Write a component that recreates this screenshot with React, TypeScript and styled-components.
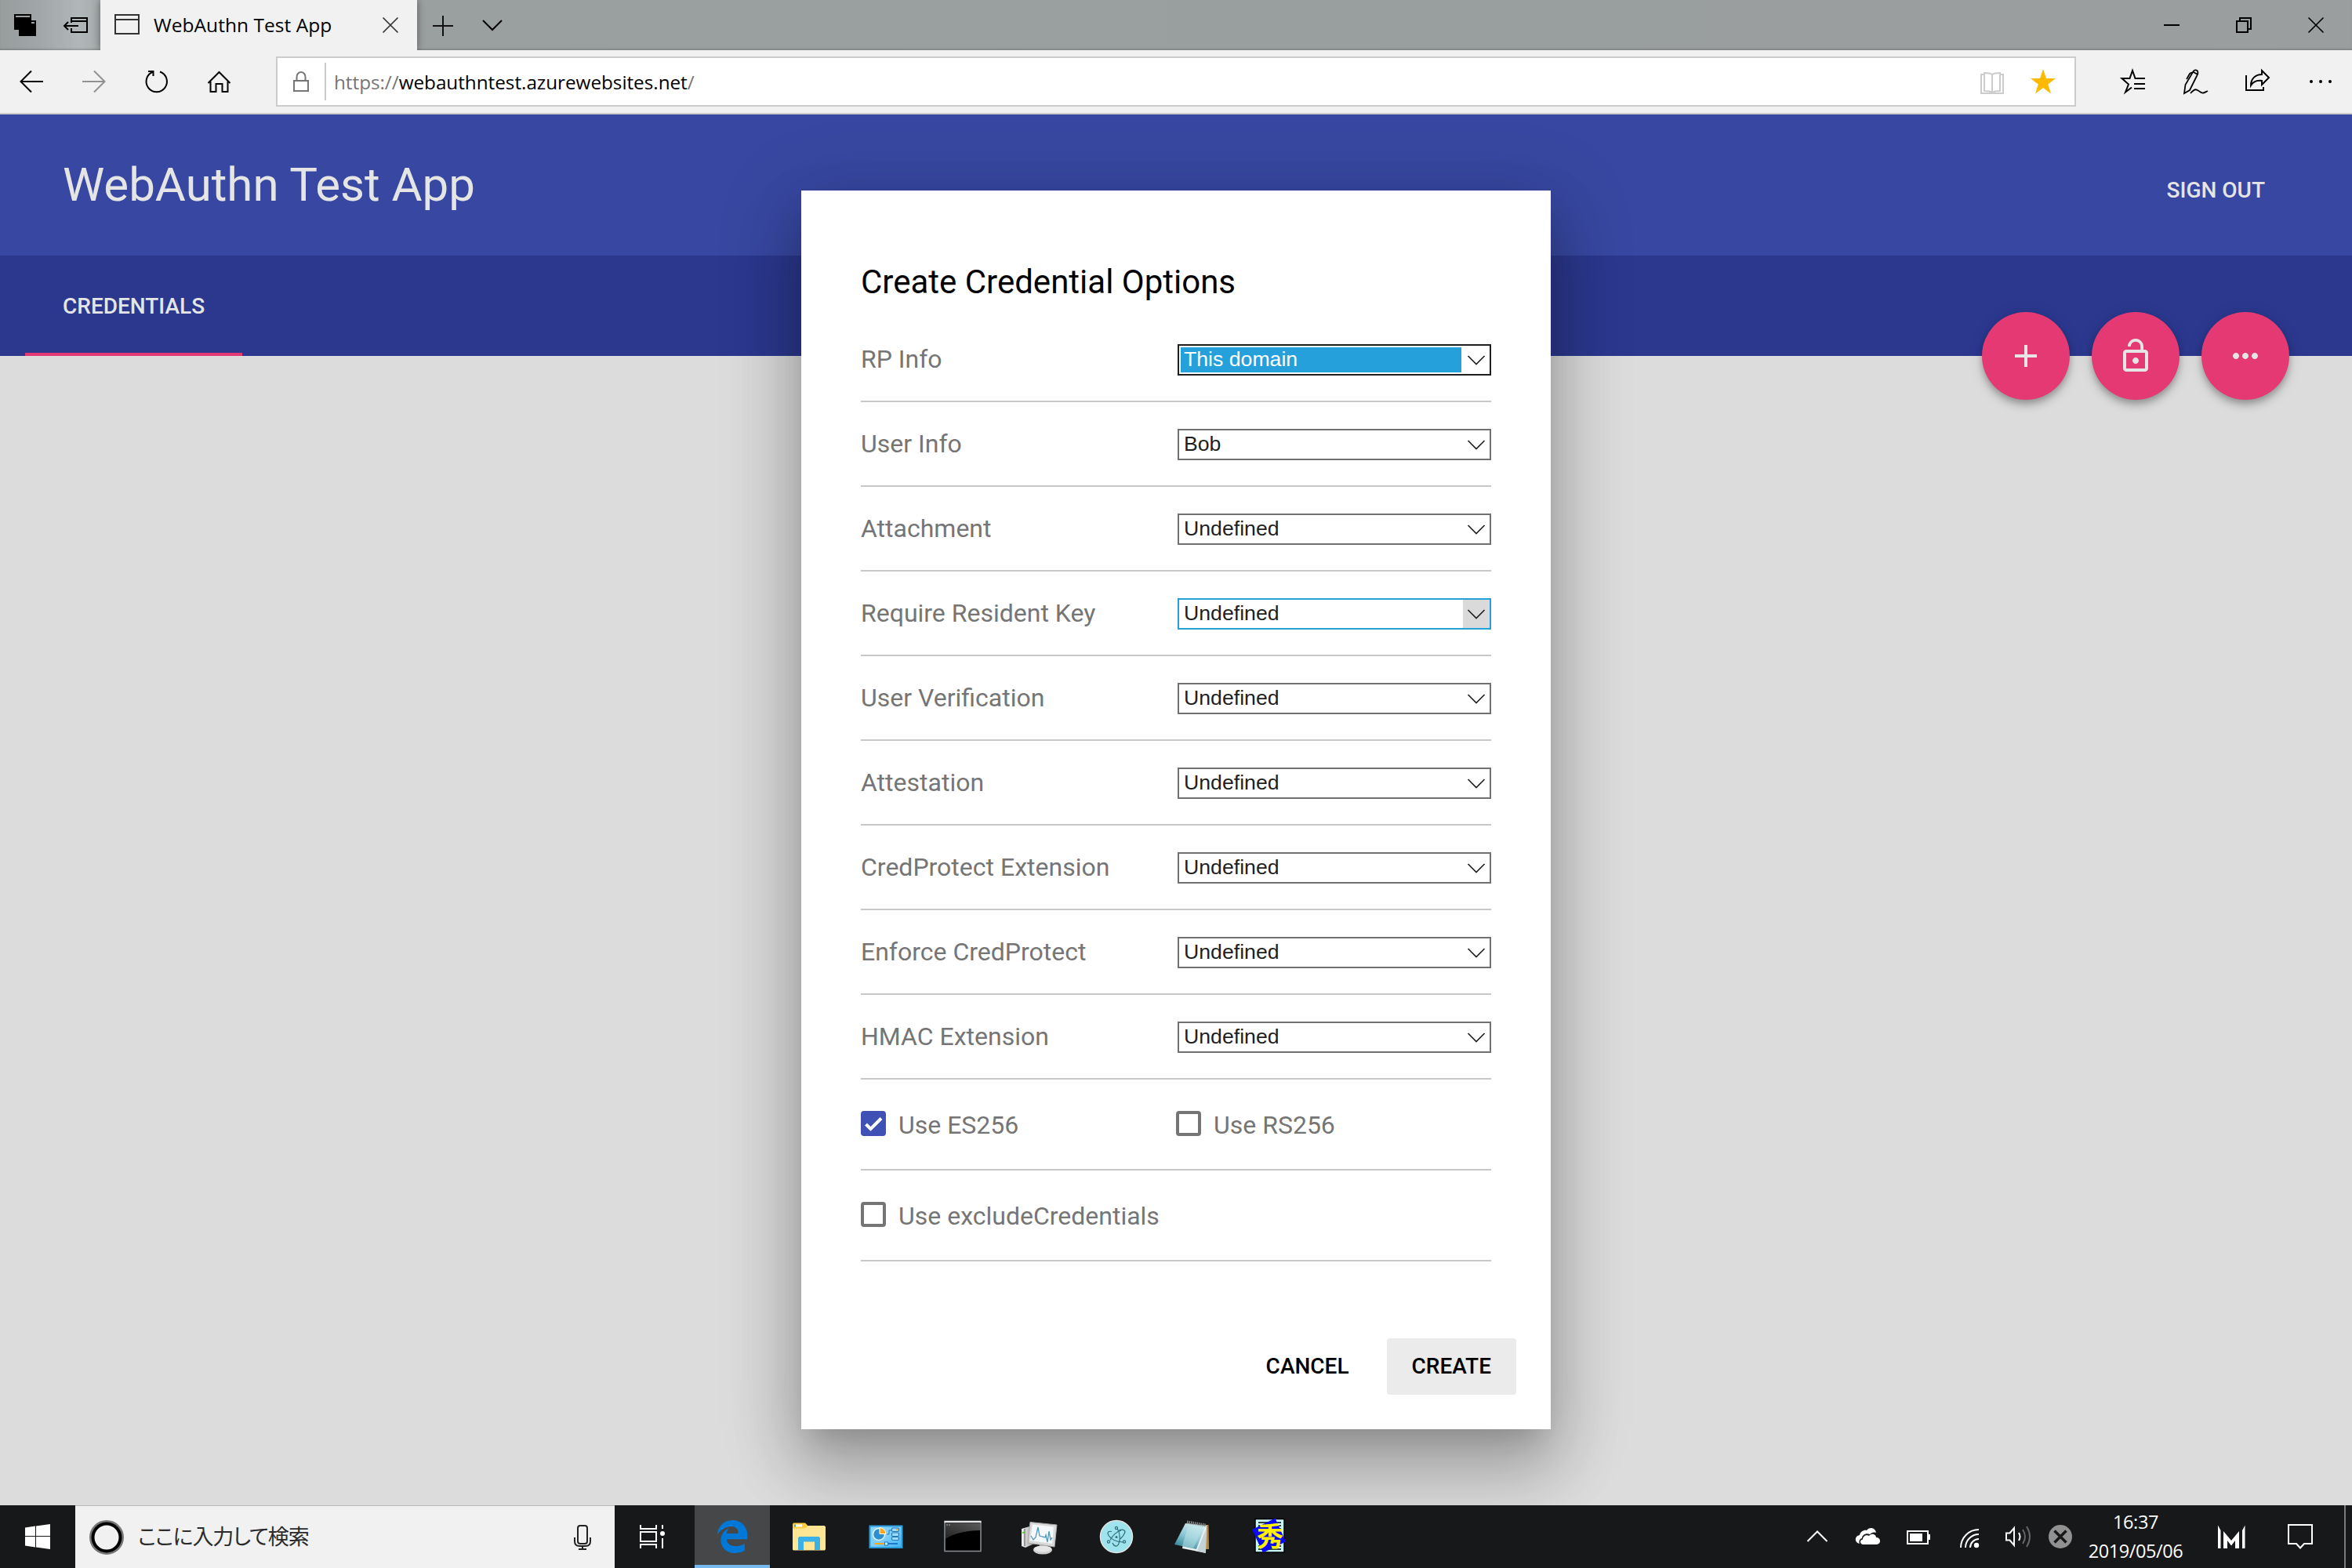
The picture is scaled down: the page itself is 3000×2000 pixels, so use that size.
import React from "react";
import styled, { createGlobalStyle, css } from "styled-components";

const roboto = `Roboto, "Liberation Sans", sans-serif`;
const system = `"Open Sans", "Noto Sans", "Noto Sans CJK JP", sans-serif`;

const GlobalStyle = createGlobalStyle`
  * { box-sizing: border-box; }
  html, body { margin: 0; padding: 0; overflow: hidden; }
  svg { display: block; flex: none; overflow: visible; }
`;

const Screen = styled.div`
  display: flex;
  flex-direction: column;
  width: 3000px;
  height: 2000px;
  overflow: hidden;
  background: #ddd;
  font-family: ${roboto};
`;

/* ---------- browser chrome ---------- */

const TitleBar = styled.div`
  display: flex;
  height: 64px;
  background: linear-gradient(90deg, #979c9d 0, #a1a6a8 50px, #b1b6b8 100px, #a6abac 128px, #9a9f9f 560px, #9a9e9e 100%);
  box-shadow: inset 0 -3px 3px -2px rgba(0, 0, 0, 0.25);
`;

const Slot = styled.div<{ $w: number }>`
  display: flex;
  align-items: center;
  justify-content: center;
  flex: none;
  width: ${(p) => p.$w}px;
  height: 100%;
`;

const Tab = styled.div`
  display: flex;
  align-items: center;
  width: 404px;
  padding: 0 10px 0 10px;
  background: #f1f1f1;
  box-shadow: 0 0 10px rgba(0, 0, 0, 0.45);
  clip-path: inset(0 -12px 0 -12px);
`;

const TabTitle = styled.span`
  flex: 1;
  padding-left: 10px;
  font: 24.5px/34px ${system};
  letter-spacing: 0.05px;
  color: #000;
  white-space: nowrap;
`;

const Spacer = styled.div`
  flex: 1;
`;

const Toolbar = styled.div`
  display: flex;
  align-items: center;
  height: 82px;
  flex: none;
  background: #f1f1f1;
  border-bottom: 2px solid #ccc;
`;

const AddressBar = styled.div`
  display: flex;
  align-items: center;
  flex: 1;
  height: 64px;
  margin: 0 32px;
  background: #fff;
  border: 2px solid #ccc;
`;

const AddressDivider = styled.div`
  width: 2px;
  height: 48px;
  background: #ccc;
`;

const Url = styled.span`
  flex: 1;
  padding: 1px 0 0 10px;
  font: 24.3px/34px ${system};
  letter-spacing: -0.03px;
  color: #767676;
  white-space: nowrap;
  b {
    font-weight: 400;
    color: #000;
  }
`;

/* ---------- page ---------- */

const Page = styled.main`
  position: relative;
  flex: 1;
  background: #f5f5f5;
`;

const Header = styled.header`
  display: flex;
  align-items: center;
  justify-content: space-between;
  height: 180px;
  padding: 0 111px 0 80px;
  background: #3f51b5;
  color: #fff;
`;

const AppTitle = styled.h1`
  margin: 0;
  font: 400 60px/72px ${roboto};
`;

const HeaderLink = styled.a`
  padding-top: 13px;
  font: 500 28px/36px ${roboto};
  text-transform: uppercase;
`;

const TabBar = styled.nav`
  display: flex;
  height: 128px;
  padding-left: 32px;
  background: #303f9f;
`;

const PageTab = styled.a`
  display: flex;
  align-items: center;
  padding: 5px 48px 0;
  border-bottom: 4px solid #ff4081;
  color: #fff;
  font: 500 28px/36px ${roboto};
  text-transform: uppercase;
`;

const FabGroup = styled.div`
  position: absolute;
  top: 252px;
  right: 80px;
  display: flex;
  gap: 28px;
`;

const Fab = styled.button`
  display: flex;
  align-items: center;
  justify-content: center;
  width: 112px;
  height: 112px;
  padding: 0;
  border: 0;
  border-radius: 50%;
  background: #ff4081;
  color: #fff;
  box-shadow: 0 8px 10px 0 rgba(0, 0, 0, 0.14), 0 2px 20px 0 rgba(0, 0, 0, 0.12), 0 4px 8px -2px rgba(0, 0, 0, 0.2);
`;

const Scrim = styled.div`
  position: absolute;
  inset: 0;
  display: flex;
  align-items: flex-start;
  justify-content: center;
  padding-top: 97px;
  background: rgba(0, 0, 0, 0.1);
  overflow: hidden;
`;

/* ---------- dialog ---------- */

const Dialog = styled.section`
  width: 956px;
  height: 1580px;
  background: #fff;
  box-shadow: 0 18px 92px 16px rgba(0, 0, 0, 0.14), 0 22px 30px -14px rgba(0, 0, 0, 0.12),
    0 48px 76px 6px rgba(0, 0, 0, 0.2);
`;

const DialogContent = styled.div`
  padding: 93px 76px 0;
`;

const DialogTitle = styled.h2`
  margin: 0 0 21px;
  font: 400 42px/48px ${roboto};
  color: #000;
`;

const OptionRow = styled.div`
  display: flex;
  align-items: center;
  justify-content: space-between;
  height: 108px;
  padding: 34px 0 32px;
  border-bottom: 2px solid #c8c8c8;
`;

const OptionLabel = styled.label`
  padding-bottom: 2px;
  font: 400 32px/36px ${roboto};
  color: #757575;
  white-space: nowrap;
`;

type SelectState = "normal" | "focused" | "hovered";

const selectBorder: Record<SelectState, string> = {
  normal: "#707070",
  focused: "#1f1f1f",
  hovered: "#26a0da",
};

const SelectBox = styled.div<{ $state: SelectState }>`
  display: flex;
  width: 400px;
  height: 40px;
  border: 2px solid ${(p) => selectBorder[p.$state]};
  background: #fff;
`;

const SelectValue = styled.span<{ $state: SelectState }>`
  flex: 1;
  padding-left: 6px;
  font: 26.67px/34px "Liberation Sans", Arial, sans-serif;
  color: #1f1f1f;
  ${(p) =>
    p.$state === "focused" &&
    css`
      margin: 2px 2px 2px 2px;
      padding-left: 4px;
      line-height: 30px;
      background: #26a0da;
      color: #fff;
    `}
`;

const SelectArrow = styled.span<{ $state: SelectState }>`
  display: flex;
  align-items: center;
  justify-content: center;
  width: 34px;
  background: ${(p) => (p.$state === "hovered" ? "#dadada" : "transparent")};
`;

const CheckRow = styled.div`
  display: grid;
  grid-template-columns: 1fr 1fr;
  height: 116px;
  padding-top: 40px;
  border-bottom: 2px solid #c8c8c8;
`;

const CheckItem = styled.label`
  display: flex;
  align-items: center;
  gap: 16px;
  height: 32px;
`;

const CheckBox = styled.span<{ $checked: boolean }>`
  display: flex;
  width: 32px;
  height: 32px;
  border: ${(p) => (p.$checked ? "0" : "4px solid #757575")};
  border-radius: 4px;
  background: ${(p) => (p.$checked ? "#3f51b5" : "#fff")};
`;

const CheckLabel = styled.span`
  margin-top: 4px;
  font: 400 32px/36px ${roboto};
  color: #757575;
`;

const DialogActions = styled.footer`
  display: flex;
  justify-content: flex-end;
  gap: 16px;
  padding: 98px 44px 0;
`;

const ActionButton = styled.button<{ $active?: boolean }>`
  height: 72px;
  padding: 0 32px;
  border: 0;
  border-radius: 4px;
  background: ${(p) => (p.$active ? "#ebebeb" : "transparent")};
  color: #000;
  font: 500 28px/72px ${roboto};
  text-transform: uppercase;
`;

/* ---------- taskbar ---------- */

const Taskbar = styled.div`
  display: flex;
  height: 80px;
  flex: none;
  background: #17181a;
  color: #fff;
`;

const SearchBox = styled.div`
  display: flex;
  align-items: center;
  width: 688px;
  padding: 0 9px 0 4px;
  background: #f1f1f1;
  border-top: 1px solid #b9b9b9;
`;

const SearchText = styled.span`
  flex: 1;
  padding: 0 0 3px 4px;
  font: 27px/40px "Noto Sans CJK JP", sans-serif;
  font-feature-settings: "palt";
  letter-spacing: -1.1px;
  color: #2b2b2b;
`;

const AppButton = styled.div<{ $active?: boolean }>`
  display: flex;
  align-items: center;
  justify-content: center;
  width: 96px;
  height: 80px;
  margin-right: 2px;
  ${(p) =>
    p.$active &&
    css`
      padding-top: 4px;
      background: #464748;
      border-bottom: 4px solid #76b9ed;
    `}
`;

const AppList = styled.div`
  display: flex;
  flex: 1;
  padding-left: 6px;
`;

const Clock = styled.div`
  width: 148px;
  padding-top: 3px;
  font: 23.5px/37px ${system};
  letter-spacing: -0.4px;
  text-align: center;
`;

const ShowDesktop = styled.div`
  width: 10px;
  margin-left: 16px;
  border-left: 2px solid #77797a;
`;

/* ---------- icons, drawn around their own centre ---------- */

type IconProps = { children: React.ReactNode; stroke?: string; sw?: number };

const Icon = ({ children, stroke = "none", sw = 2 }: IconProps) => (
  <svg width="52" height="52" viewBox="-26 -26 52 52" fill="none" stroke={stroke} strokeWidth={sw}>
    {children}
  </svg>
);

const Material = ({ d }: { d: string }) => (
  <svg width="48" height="48" viewBox="0 0 24 24" fill="currentColor">
    <path d={d} />
  </svg>
);

const TabsAsideIcon = () => (
  <Icon>
    <path fill="#000" fillRule="evenodd" d="M-14-14H8V6H-14zM-12-12V-10H6V-12z" />
    <path fill="#000" fillRule="evenodd" d="M-8-6H14V14H-8zM-6-4V-2H12V-4z" />
  </Icon>
);

const SetAsideIcon = () => (
  <Icon stroke="#000">
    <path d="M-5-3V-9H15V9H-5V4M-5-5H15M-14 1H4M-9-4L-14 1L-9 6" />
  </Icon>
);

const PageIcon = () => (
  <Icon stroke="#333">
    <path d="M-15-13H15V11H-15zM-15-7H15" />
  </Icon>
);

const CloseIcon = ({ color = "#000" }: { color?: string }) => (
  <Icon stroke={color} sw={1.7}>
    <path d="M-9.5-9.5L9.5 9.5M9.5-9.5L-9.5 9.5" />
  </Icon>
);

const Arrow = ({ color, flip }: { color: string; flip?: boolean }) => (
  <Icon stroke={color}>
    <path transform={flip ? "scale(-1 1)" : undefined} d="M15 0H-13M0-13.5L-13.5 0L0 13.5" />
  </Icon>
);

const ChevronDown = () => (
  <svg width="24" height="14" viewBox="-12 -7 24 14" fill="none" stroke="#222" strokeWidth="1.7">
    <path d="M-10.5-5L0 5.5L10.5-5" />
  </svg>
);

const EdgeIcon = () => (
  <svg width="44" height="44" viewBox="-5 -5 522 522" fill="#0078d7">
    <path d="M25.71 228.16l.35-.48c0 .16 0 .32-.07.48zm460.58 15.51c0-44-7.76-84.46-28.81-122.4C416.5 47.88 343.91 8 258.89 8 119 7.72 40.62 113.21 26.06 227.68c42.42-61.31 117.07-121.38 220.37-125 0 0 109.67 0 99.42 105H170c6.37-37.39 18.55-59 34.34-78.93-75.05 34.9-121.85 96.1-120.75 188.32.83 71.45 50.13 144.84 120.75 172 83.35 31.84 192.77 7.2 240.13-21.33V363.31C363.6 419.8 173.6 424.23 172.21 295.74h314.13v-52.07z" />
  </svg>
);

const FolderIcon = () => (
  <Icon>
    <path fill="#ffe694" d="M-21-14H19.5L21-12.500V16L20 17.500H-20L-21 16.500z" />
    <path fill="#ffcd3c" d="M-21-16L-20-17.500H-5L-2-14.500V-13L-6-10.500H-21z" />
    <path fill="#fff" d="M-17-15.500H-9V-12.500H-17z" />
    <path fill="#3bb1e8" d="M-19-15.500H-17V-12.500H-19zM-14 1.500L-12.500 0H12.500L14 1.500V17H7V6.500H-7V17H-14z" />
  </Icon>
);

const ControlPanelIcon = () => (
  <Icon>
    <defs>
      <linearGradient id="cpBg" x1="0" y1="0" x2="1" y2="1">
        <stop offset="0" stopColor="#8fd6fb" />
        <stop offset="0.5" stopColor="#7dcffb" />
        <stop offset="1" stopColor="#3fb2f5" />
      </linearGradient>
    </defs>
    <rect x="-20.500" y="-13.500" width="41" height="27.500" fill="url(#cpBg)" stroke="#2c9bdc" />
    <circle cx="-9" cy="-3" r="7.500" fill="#2b8fd0" stroke="#e6f6ff" strokeWidth="1.500" />
    <path fill="#fca81c" stroke="#fff" strokeWidth="1" d="M-8-3.500V-11.500A8 8 0 0 1 0-3.500z" />
    <path stroke="#2479b8" strokeWidth="1" d="M1-3H4V-8H7" />
    <g fill="#9fdcff" stroke="#2479b8" strokeWidth="1.200">
      <rect x="7.500" y="-11" width="9" height="4.500" rx="1.500" />
      <rect x="7.500" y="-5" width="9" height="4.500" rx="1.500" />
      <rect x="7.500" y="0.500" width="9" height="4" rx="1.500" />
    </g>
    <rect x="13" y="-10" width="2.500" height="2" fill="#fca81c" />
    <path stroke="#fca81c" d="M-15 9H-2" />
    <path stroke="#1e78c8" d="M2 9H15" />
    <rect x="-1.500" y="7" width="4" height="4" fill="#d8f0ff" stroke="#2479b8" strokeWidth="1" />
  </Icon>
);

const TerminalIcon = () => (
  <Icon>
    <defs>
      <linearGradient id="termGlare" x1="0" y1="1" x2="1" y2="0">
        <stop offset="0" stopColor="#222" />
        <stop offset="1" stopColor="#5a5a5a" />
      </linearGradient>
    </defs>
    <rect x="-23" y="-19" width="46" height="37.500" fill="#000" stroke="#8d9099" strokeWidth="1.500" />
    <path fill="url(#termGlare)" d="M-22-17H22V-8C4-8-12-4-22 3z" />
    <path stroke="#e8e8ea" strokeWidth="2.500" d="M-23.500-19H23.500" />
    <path stroke="#aaa" strokeWidth="1" strokeDasharray="2 1" d="M-21-15H-15" />
  </Icon>
);

const MonitorIcon = () => (
  <Icon>
    <defs>
      <linearGradient id="pcCase" x1="0" y1="0" x2="1" y2="0">
        <stop offset="0" stopColor="#f2f2f2" />
        <stop offset="1" stopColor="#9a9a9a" />
      </linearGradient>
    </defs>
    <path fill="url(#pcCase)" d="M-23-10L-13-13L-7-11V9L-18 14L-23 12z" />
    <path stroke="#555" strokeWidth="1" d="M-19-10V12" />
    <path stroke="#61c63c" d="M-22-5L-19-5.500" />
    <ellipse cx="4" cy="17" rx="12" ry="5.500" fill="#cfcfcf" />
    <path fill="#999" d="M0 8H8L9 16H0z" />
    <ellipse cx="4" cy="15.500" rx="11" ry="4" fill="#e6e6e6" />
    <path fill="#d9d9d9" stroke="#a9a9a9" strokeWidth="1" d="M-12-18.500L22-15L19 13L-15 8z" />
    <path fill="#f4f9fd" d="M-9-15.500L18-12.500L16 9L-12 5z" />
    <path stroke="#4e96bf" strokeWidth="1.300" d="M-11-1L-8 4L-5 1L-2-12L0-1L3 0L7 1L8-2L10 7L12-7L14 4L16 1" />
  </Icon>
);

const ElectronIcon = () => (
  <Icon>
    <circle r="20.500" fill="#9fe3ec" stroke="#e3e3e3" strokeWidth="1.500" />
    <g stroke="#2f6f7d" strokeWidth="1.200">
      <path d="M-6-6.500C-11-7.500-12-5-10-1.500C-7 3-1 6.500 8 7" />
      <path d="M3-8C9-10 12-8 10.500-4.500C9-1 7 1 5 3" />
      <path d="M-8 4.500C-4-3 1-6.500 6-8" />
      <path d="M1-10.500C5-4 5 4 3 9C1 13.500-3 13-5 8" />
      <circle cx="0" cy="-11" r="1.600" />
      <circle cx="-10" cy="6.500" r="1.600" />
      <circle cx="10" cy="6.500" r="1.600" />
    </g>
    <circle r="1.500" cy="0.500" fill="#2f6f7d" />
  </Icon>
);

const NotepadIcon = () => (
  <Icon>
    <defs>
      <linearGradient id="noteCover" x1="0.700" y1="0" x2="0.200" y2="1">
        <stop offset="0" stopColor="#d5edf1" />
        <stop offset="0.500" stopColor="#8cc7d3" />
        <stop offset="1" stopColor="#2b8193" />
      </linearGradient>
    </defs>
    <path fill="#b38b47" d="M16-15H19.500L20 16H14z" />
    <path fill="#e9f0f2" d="M-8-17L17-14L16 21L-14 15z" />
    <path fill="#c3d2d6" d="M16-9L16 21L5 18z" />
    <path fill="url(#noteCover)" d="M-10-17L15.500-14L4 16L-24 10z" />
    <path fill="#bfe3ea" opacity="0.500" d="M-6-16L14-14L0 15L-14 12z" />
    <path stroke="#8b8b8b" strokeWidth="4" strokeDasharray="1.500 1" d="M-8-18.500L16-14.500" />
  </Icon>
);

const HidemaruIcon = () => (
  <Icon>
    <rect x="-19" y="-22.500" width="37" height="42.500" fill="#c9f7f7" stroke="#000" strokeWidth="1.500" />
    <path
      stroke="#000"
      strokeWidth="1.600"
      d="M-15-18H14M-15-14H14M-15-10H14M-15-6H14M-15 4H14M-15 8H14M-15 12H14M-15 16H14"
    />
    <path fill="#0a0af0" d="M6.500-23.500L20 6.500L-9 20.500L-23-9z" />
    <text
      x="0"
      y="11.500"
      textAnchor="middle"
      fill="#ffef00"
      stroke="none"
      fontFamily="'Noto Sans CJK JP', sans-serif"
      fontSize="34"
      fontWeight="700"
    >
      秀
    </text>
  </Icon>
);

/* ---------- content ---------- */

const options: { label: string; value: string; state?: SelectState }[] = [
  { label: "RP Info", value: "This domain", state: "focused" },
  { label: "User Info", value: "Bob" },
  { label: "Attachment", value: "Undefined" },
  { label: "Require Resident Key", value: "Undefined", state: "hovered" },
  { label: "User Verification", value: "Undefined" },
  { label: "Attestation", value: "Undefined" },
  { label: "CredProtect Extension", value: "Undefined" },
  { label: "Enforce CredProtect", value: "Undefined" },
  { label: "HMAC Extension", value: "Undefined" },
];

const Select = ({ value, state = "normal" }: { value: string; state?: SelectState }) => (
  <SelectBox $state={state}>
    <SelectValue $state={state}>{value}</SelectValue>
    <SelectArrow $state={state}>
      <ChevronDown />
    </SelectArrow>
  </SelectBox>
);

const Check = ({ label, checked = false }: { label: string; checked?: boolean }) => (
  <CheckItem>
    <CheckBox $checked={checked}>
      {checked && (
        <svg width="32" height="32" viewBox="0 0 32 32" fill="none" stroke="#fff" strokeWidth="4">
          <path d="M6.500 17L12.500 23L26 9.500" />
        </svg>
      )}
    </CheckBox>
    <CheckLabel>{label}</CheckLabel>
  </CheckItem>
);

const BrowserChrome = () => (
  <>
    <TitleBar>
      <Slot $w={64}><TabsAsideIcon /></Slot>
      <Slot $w={64}><SetAsideIcon /></Slot>
      <Tab>
        <Slot $w={48}><PageIcon /></Slot>
        <TabTitle>WebAuthn Test App</TabTitle>
        <Slot $w={48}><CloseIcon color="#333" /></Slot>
      </Tab>
      <Slot $w={64}>
        <Icon stroke="#111"><path d="M-12 1H14M1-12V14" /></Icon>
      </Slot>
      <Slot $w={64}>
        <Icon stroke="#000"><path d="M-12-6L0 6L12-6" /></Icon>
      </Slot>
      <Spacer />
      <Slot $w={92}>
        <Icon stroke="#000"><path d="M-10 0H10" /></Icon>
      </Slot>
      <Slot $w={92}>
        <Icon stroke="#000"><path d="M-9-5H5V9H-9zM-5-5V-9H9V5H5" /></Icon>
      </Slot>
      <Slot $w={92}><CloseIcon /></Slot>
    </TitleBar>
    <Toolbar>
      <Slot $w={80}><Arrow color="#000" /></Slot>
      <Slot $w={80}><Arrow color="#919191" flip /></Slot>
      <Slot $w={80}>
        <Icon stroke="#000">
          <path d="M4-12.500A13.200 13.200 0 1 1-4.500-12.500M-11-13H-4.500V-7" />
        </Icon>
      </Slot>
      <Slot $w={80}>
        <Icon stroke="#000">
          <path d="M-14.500 2L-0.500-12L13.500 2M-11.500 0V13H-4.500V3H3.500V13H10.500V0" />
        </Icon>
      </Slot>
      <AddressBar>
        <Slot $w={60}>
          <Icon stroke="#767676"><path d="M-9-1H9V12H-9zM-5.500-1V-6A5.500 6 0 0 1 5.500-6V-1" /></Icon>
        </Slot>
        <AddressDivider />
        <Url>https://<b>webauthntest.azurewebsites.net</b>/</Url>
        <Slot $w={66}>
          <Icon stroke="#ccc">
            <path d="M-10-9H-14V15H14V-9H10M0-9V14M0-9Q-3-11-10-11V12Q-3 12 0 14Q3 12 10 12V-11Q3-11 0-9" />
          </Icon>
        </Slot>
        <Slot $w={64}>
          <Icon>
            <path fill="#ffb900" d="M0-16L4-4H16L6.200 3.500L10 15.500L0 8L-10 15.500L-6.200 3.500L-16-4H-4z" />
          </Icon>
        </Slot>
        <Slot $w={8} />
      </AddressBar>
      <Slot $w={80}>
        <Icon stroke="#000">
          <path d="M16-4H3.500L0-14L-3.500-4H-13.500L-5 3.500L-9 13.500L-1 7.500M2 3H16M2 9H16" />
        </Icon>
      </Slot>
      <Slot $w={80}>
        <Icon stroke="#000" sw={1.8}>
          <path d="M-14 15L-12.500 4L-3-12Q-1-16 2.500-14Q4-12 3-9L-5 7L-7 11zM-2-12L3-9M-11-3L-7-10Q-5-12-3-11" />
          <path d="M-6 15C0 8 2 10 6 13S12 14 16 12" />
        </Icon>
      </Slot>
      <Slot $w={80}>
        <Icon stroke="#000">
          <path d="M-15-8V11H7V7M5-14L14-5L5 4V-1C-2-2-6 0-9 5C-9-4-3-9 5-9z" />
        </Icon>
      </Slot>
      <Slot $w={80}>
        <Icon>
          <path
            stroke="#000"
            strokeWidth="4"
            strokeLinecap="round"
            d="M-12 0H-11.990M0 0H0.010M12 0H12.010"
          />
        </Icon>
      </Slot>
    </Toolbar>
  </>
);

const CredentialDialog = () => (
  <Dialog>
    <DialogContent>
      <DialogTitle>Create Credential Options</DialogTitle>
      {options.map((o) => (
        <OptionRow key={o.label}>
          <OptionLabel>{o.label}</OptionLabel>
          <Select value={o.value} state={o.state} />
        </OptionRow>
      ))}
      <CheckRow>
        <Check label="Use ES256" checked />
        <Check label="Use RS256" />
      </CheckRow>
      <CheckRow>
        <Check label="Use excludeCredentials" />
      </CheckRow>
    </DialogContent>
    <DialogActions>
      <ActionButton>Cancel</ActionButton>
      <ActionButton $active>Create</ActionButton>
    </DialogActions>
  </Dialog>
);

const WindowsTaskbar = () => (
  <Taskbar>
    <Slot $w={96}>
      <Icon>
        <path
          fill="#fff"
          d="M-16-11.500L-3-13.400V-1H-16zM-2-13.500L16-16V-1H-2zM-16 0H-3V13.400L-16 11.500zM-2 0H16V16L-2 13.500z"
        />
      </Icon>
    </Slot>
    <SearchBox>
      <Slot $w={72}>
        <Icon>
          <circle r="20.500" stroke="#777" strokeWidth="3" />
          <circle r="17.500" stroke="#000" strokeWidth="4" />
        </Icon>
      </Slot>
      <SearchText>ここに入力して検索</SearchText>
      <Slot $w={64}>
        <Icon stroke="#222">
          <rect x="-6" y="-15" width="12" height="23" rx="3" />
          <path d="M-10 0V5Q-10 11-4 11H4Q10 11 10 5V0M0 11V15M-5 15H5" />
        </Icon>
      </Slot>
    </SearchBox>
    <Slot $w={96}>
      <Icon stroke="#fff">
        <path d="M-15-15V-10H5V-15M-15-6H5V6H-15zM-15 15V10H5V15M13-15V-10M13 2V15" />
        <circle cx="13" cy="-4" r="3" fill="#fff" stroke="none" />
      </Icon>
    </Slot>
    <AppList>
      <AppButton $active><EdgeIcon /></AppButton>
      <AppButton><FolderIcon /></AppButton>
      <AppButton><ControlPanelIcon /></AppButton>
      <AppButton><TerminalIcon /></AppButton>
      <AppButton><MonitorIcon /></AppButton>
      <AppButton><ElectronIcon /></AppButton>
      <AppButton><NotepadIcon /></AppButton>
      <AppButton><HidemaruIcon /></AppButton>
    </AppList>
    <Slot $w={64}>
      <Icon stroke="#fff"><path d="M-12.500 6L0-6.500L12.500 6" /></Icon>
    </Slot>
    <Slot $w={64}>
      <Icon>
        <path
          fill="#fff"
          d="M-10 9C-17 8-17-1-10-2C-9-7-4-9-1-8C2-13 10-12 11-5C8-6 5-5 3-3C-2-5-7-2-7 2C-11 3-11 7-10 9z"
        />
        <path
          fill="#fff"
          d="M-6 10C-10 9-10 4-6 3.500C-6-1-1-3 2-1C5-5 11-3 11 1C17 1 18 9 12 10z"
        />
      </Icon>
    </Slot>
    <Slot $w={64}>
      <Icon>
        <path stroke="#fff" d="M-13-7H13V9H-13z" />
        <path fill="#fff" d="M-10-4H6V6H-10zM14-3H16V4H14z" />
      </Icon>
    </Slot>
    <Slot $w={64}>
      <Icon stroke="#fff">
        <path d="M-9 14A23 23 0 0 1 14-9M-3 14A17 17 0 0 1 14-3M3 14A11 11 0 0 1 14 3" />
        <circle cx="11" cy="11" r="3.200" fill="#fff" stroke="none" />
      </Icon>
    </Slot>
    <Slot $w={64}>
      <Icon stroke="#fff">
        <path d="M-15-4.500H-10.500L-5-11V11L-10.500 4.500H-15z" />
        <path d="M1-5Q4 0 1 5" />
        <g stroke="#666">
          <path d="M6-9Q12 0 6 9" />
          <path d="M11-13Q19 0 11 13" />
        </g>
      </Icon>
    </Slot>
    <Slot $w={44}>
      <Icon>
        <circle r="15" fill="#919191" />
        <path stroke="#17181a" strokeWidth="3.500" d="M-7.500-7.500L7.500 7.500M7.500-7.500L-7.500 7.500" />
      </Icon>
    </Slot>
    <Clock>
      <div>16:37</div>
      <div>2019/05/06</div>
    </Clock>
    <Slot $w={96}>
      <Icon>
        <path
          fill="#fff"
          d="M-17-14.500L-13.500-8V15H-17zM17.500-14.500L14-8V15H17.500zM-10-7L0 5L10-7V15H5V5L0 11.500L-5 5V15H-10z"
        />
      </Icon>
    </Slot>
    <Slot $w={80}>
      <Icon stroke="#fff">
        <path d="M-15-15H15V9H5L0 14.500L-5 9H-15z" />
      </Icon>
    </Slot>
    <ShowDesktop />
  </Taskbar>
);

export default function App() {
  return (
    <Screen>
      <GlobalStyle />
      <BrowserChrome />
      <Page>
        <Header>
          <AppTitle>WebAuthn Test App</AppTitle>
          <HeaderLink>Sign out</HeaderLink>
        </Header>
        <TabBar>
          <PageTab>Credentials</PageTab>
        </TabBar>
        <FabGroup>
          <Fab>
            <Material d="M19 13h-6v6h-2v-6H5v-2h6V5h2v6h6v2z" />
          </Fab>
          <Fab>
            <Material d="M12 17c1.100 0 2-.9 2-2s-.9-2-2-2-2 .9-2 2 .9 2 2 2zm6-9h-1V6c0-2.760-2.240-5-5-5S7 3.240 7 6h1.900c0-1.710 1.390-3.100 3.100-3.100 1.710 0 3.100 1.390 3.100 3.100v2H6c-1.100 0-2 .9-2 2v10c0 1.100.9 2 2 2h12c1.100 0 2-.9 2-2V10c0-1.100-.9-2-2-2zm0 12H6V10h12v10z" />
          </Fab>
          <Fab>
            <Material d="M6 10c-1.100 0-2 .9-2 2s.9 2 2 2 2-.9 2-2-.9-2-2-2zm12 0c-1.100 0-2 .9-2 2s.9 2 2 2 2-.9 2-2-.9-2-2-2zm-6 0c-1.100 0-2 .9-2 2s.9 2 2 2 2-.9 2-2-.9-2-2-2z" />
          </Fab>
        </FabGroup>
        <Scrim>
          <CredentialDialog />
        </Scrim>
      </Page>
      <WindowsTaskbar />
    </Screen>
  );
}
